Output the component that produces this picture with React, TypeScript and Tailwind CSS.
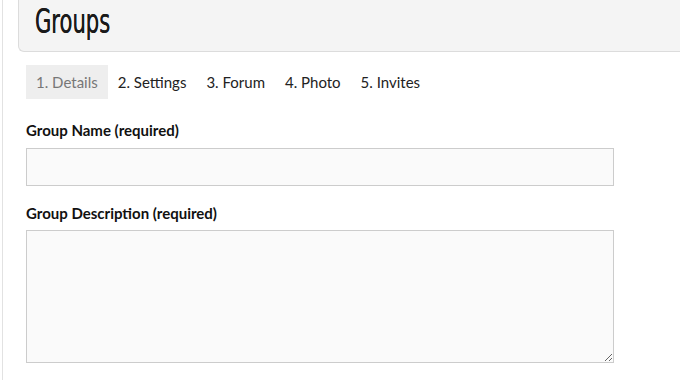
import React from 'react';

const tabs = ['1. Details', '2. Settings', '3. Forum', '4. Photo', '5. Invites'];

export default function App(): React.ReactElement {
  return (
    <div className="h-[380px] w-[680px] overflow-hidden bg-white">
      <div className="ml-[2px] h-full border-l border-[#e2e2e2] font-['Lato','Liberation_Sans',sans-serif] text-[#333]">
        {/* page header */}
        <div className="ml-[15px] h-[52px] rounded-bl-[6px] border-b border-l border-[#dcdcdc] bg-[#f4f4f4] pl-[16px]">
          <h1 className="inline-block origin-left scale-x-[0.69] pt-[1px] font-['DejaVu_Sans_Condensed','DejaVu_Sans',sans-serif] text-[34px] leading-[40px] font-normal text-[#1a1a1a] [text-shadow:0_0_0.6px_#1a1a1a]">
            Groups
          </h1>
        </div>

        <div className="pl-[23px]">
          {/* steps */}
          <ul className="mt-[13px] flex">
            {tabs.map((t, i) => (
              <li
                key={t}
                className={
                  i === 0
                    ? 'bg-[#eeeeee] px-[10px] text-[15px] leading-[34px] text-[#777]'
                    : 'px-[10px] text-[15px] leading-[34px] text-[#222]'
                }
              >
                {t}
              </li>
            ))}
          </ul>

          <form className="mt-[19px] w-[588px]">
            <label className="block text-[15px] leading-[24px] font-bold text-[#111]">Group Name (required)</label>
            <input
              type="text"
              className="mt-[6px] block h-[38px] w-full border border-[#cccccc] bg-[#fafafa]"
            />
            <label className="mt-[15px] block text-[15px] leading-[24px] font-bold text-[#111]">
              Group Description (required)
            </label>
            <textarea className="mt-[5px] block h-[133px] w-full border border-[#cccccc] bg-[#fafafa]" />
          </form>
        </div>
      </div>
    </div>
  );
}
